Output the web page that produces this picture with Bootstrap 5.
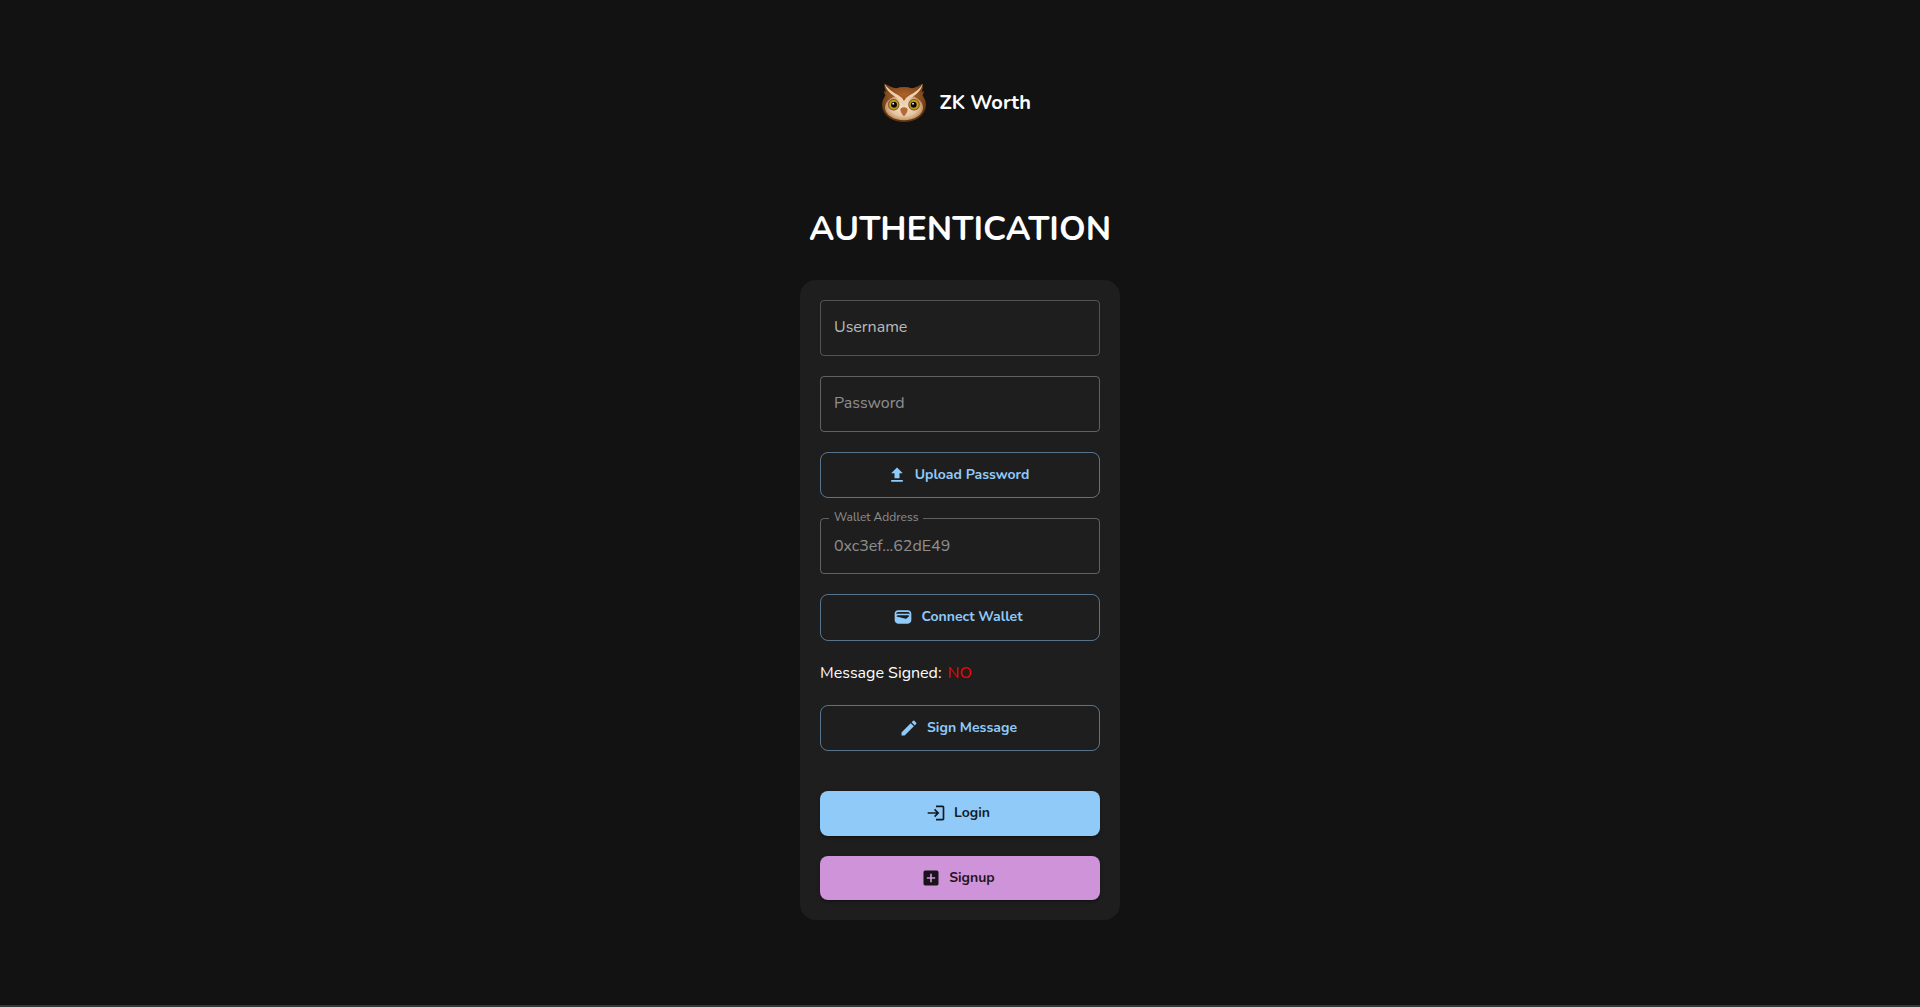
<!DOCTYPE html>
<html lang="en">
<head>
<meta charset="utf-8">
<meta name="viewport" content="width=device-width, initial-scale=1">
<title>ZK Worth</title>
<link rel="stylesheet" href="https://cdn.jsdelivr.net/npm/bootstrap@5.3.0/dist/css/bootstrap.min.css">
<style>
  body { background: #121212; color: #fff; font-family: Nunito, "Nunito Sans", Lato, sans-serif; font-size: 16px; line-height: 24px; overflow: hidden; }
  .page { height: 100vh; border-bottom: 2px solid #393637; padding-top: 78px; }
  .brand { height: 48px; font-size: 20px; font-weight: 700; gap: 11.5px; padding-right: 9px; }
  .brand span { padding-top: 2px; }
  .page-title { font-size: 34px; font-weight: 700; line-height: 42px; margin: 82px 0 29.6px; }
  .auth-card { width: 320px; background: #1e1e1e; border-radius: 16px; padding: 20px; }
  .field { height: 56px; margin-bottom: 20px; padding: 15.2px 13px; line-height: 23px; border: 1px solid rgba(255,255,255,.23); border-radius: 4px; color: rgba(255,255,255,.7); }
  .field-disabled { border-color: rgba(255,255,255,.3); color: rgba(255,255,255,.5); }
  .field-filled { margin-top: 20px; padding-top: 15.5px; }
  .field-label { top: -13.2px; left: 8px; padding: 0 5px; font-size: 12px; background: #1e1e1e; }
  .field-label, .field-value { white-space: nowrap; }
  .action { --bs-btn-font-size: 14px; --bs-btn-font-weight: 700; --bs-btn-line-height: 24.5px; --bs-btn-padding-y: 10px; --bs-btn-border-radius: 8px; gap: 8px; padding-right: 16px; }
  .action svg { width: 20px; height: 20px; fill: currentColor; }
  .action-outline { --bs-btn-color: #90caf9; --bs-btn-border-color: rgba(144,202,249,.5); }
  .action-solid { --bs-btn-border-width: 0; color: rgba(0,0,0,.87); box-shadow: 0 3px 1px -2px rgba(0,0,0,.2), 0 2px 2px rgba(0,0,0,.14), 0 1px 5px rgba(0,0,0,.12); }
  .login { --bs-btn-bg: #90caf9; margin: 40px 0 20px; }
  .signup { --bs-btn-bg: #ce93d8; }
  .signed-row { margin: 20px 0; gap: 6px; }
  .signed-no { color: #f00; }
</style>
</head>
<body>
<main class="page d-flex flex-column align-items-center">
  <div class="brand d-flex align-items-center">
    <svg width="48" height="48" viewBox="0 0 48 48">
      <defs>
        <radialGradient id="head" cx=".5" cy=".35" r=".6"><stop offset="0" stop-color="#b06a30"/><stop offset=".6" stop-color="#8c501f"/><stop offset="1" stop-color="#623610"/></radialGradient>
        <radialGradient id="brow" cx=".5" cy=".6" r=".6"><stop offset="0" stop-color="#b0622a"/><stop offset="1" stop-color="#7c4519"/></radialGradient>
        <radialGradient id="face" cx=".5" cy=".5" r=".52"><stop offset="0" stop-color="#f6e2ca"/><stop offset=".65" stop-color="#e6c6a3"/><stop offset="1" stop-color="#bd8a5a"/></radialGradient>
        <radialGradient id="eye"><stop offset=".45" stop-color="#e9b91f"/><stop offset=".78" stop-color="#b88c1c"/><stop offset="1" stop-color="#5a3f1a"/></radialGradient>
      </defs>
      <path fill="url(#head)" d="M4.4 5.8C9 8 12.5 9.8 16 10.5Q24 8 32 10.5C35 9.8 39 8 42.8 5.8C43.3 9 42.5 11.5 41.6 14L44.2 13L42.6 17.5C45.2 21 46.1 24.5 45.9 28C45 38.5 34.5 44 24 44S3 38.5 2.1 28C1.9 24.5 2.8 21 5.4 17.5L3.6 13L6.2 14C5 11.5 4 9 4.4 5.8Z"/>
      <ellipse cx="24" cy="29.5" rx="19" ry="12.8" fill="url(#face)"/>
      <path fill="url(#brow)" d="M4.4 5.8C9 8.5 12.5 10 16 10.5Q24 8 32 10.5C35 10 39 8.5 42.8 5.8Q40 13 30 17.5Q26 20 24 24Q22 20 18 17.5Q8 13 4.4 5.8Z"/>
      <path fill="#edd0af" d="M4.6 6Q9 12.5 18 17Q22.5 19.5 24 23Q25.5 19.5 30 17Q39 12.5 42.6 6Q41 13.5 32.5 19Q27 22 24.8 29H23.2Q21 22 15.5 19Q6.5 13.5 4.6 6Z"/>
      <g fill="url(#eye)"><circle cx="13.7" cy="26.7" r="5.7"/><circle cx="34" cy="26.7" r="5.7"/></g>
      <g fill="#090909"><circle cx="14" cy="26.7" r="3"/><circle cx="33.7" cy="26.7" r="3"/></g>
      <g fill="#fff"><circle cx="13.2" cy="25.7" r=".9"/><circle cx="33" cy="25.7" r=".9"/></g>
      <path fill="#b5693a" d="M24 29.2C26.4 29.2 27.9 30.4 27.7 32C27.2 34.8 25.2 37 24 38.5C22.8 37 20.8 34.8 20.3 32C20.1 30.4 21.6 29.2 24 29.2Z"/>
    </svg>
    <span>ZK Worth</span>
  </div>
  <h1 class="page-title">AUTHENTICATION</h1>
  <section class="auth-card d-flex flex-column">
    <div class="field">Username</div>
    <div class="field field-disabled">Password</div>
    <button type="button" class="btn action action-outline d-flex justify-content-center align-items-center">
      <svg viewBox="0 0 24 24"><path d="M5 20h14v-2H5v2zm0-10h4v6h6v-6h4l-7-7-7 7z"/></svg>
      <span>Upload Password</span>
    </button>
    <div class="field field-disabled field-filled position-relative">
      <span class="field-label position-absolute">Wallet Address</span>
      <span class="field-value">0xc3ef...62dE49</span>
    </div>
    <button type="button" class="btn action action-outline d-flex justify-content-center align-items-center">
      <svg viewBox="0 0 24 24"><path d="M18 4H6C3.79 4 2 5.79 2 8v8c0 2.21 1.79 4 4 4h12c2.21 0 4-1.79 4-4V8c0-2.21-1.79-4-4-4zm-1.86 9.77c-.24.2-.57.28-.88.2L4.15 11.25C4.45 10.52 5.16 10 6 10h12c.67 0 1.26.34 1.63.84l-3.49 2.93zM6 6h12c1.1 0 2 .9 2 2v.55c-.59-.34-1.27-.55-2-.55H6c-.73 0-1.41.21-2 .55V8c0-1.1.9-2 2-2z"/></svg>
      <span>Connect Wallet</span>
    </button>
    <div class="signed-row d-flex"><span>Message Signed:</span><span class="signed-no">NO</span></div>
    <button type="button" class="btn action action-outline d-flex justify-content-center align-items-center">
      <svg viewBox="0 0 24 24"><path d="M3 17.25V21h3.75L17.81 9.94l-3.75-3.75L3 17.25zM20.71 7.04c.39-.39.39-1.02 0-1.41l-2.34-2.34a.9959.9959 0 0 0-1.41 0l-1.83 1.83 3.75 3.75 1.83-1.83z"/></svg>
      <span>Sign Message</span>
    </button>
    <button type="button" class="btn action action-solid login d-flex justify-content-center align-items-center">
      <svg viewBox="0 0 24 24"><path d="M11 7 9.6 8.4l2.6 2.6H2v2h10.2l-2.6 2.6L11 17l5-5-5-5zm9 12h-8v2h8c1.1 0 2-.9 2-2V5c0-1.1-.9-2-2-2h-8v2h8v14z"/></svg>
      <span>Login</span>
    </button>
    <button type="button" class="btn action action-solid signup d-flex justify-content-center align-items-center">
      <svg viewBox="0 0 24 24"><path d="M19 3H5c-1.11 0-2 .9-2 2v14c0 1.1.89 2 2 2h14c1.1 0 2-.9 2-2V5c0-1.1-.9-2-2-2zm-2 10h-4v4h-2v-4H7v-2h4V7h2v4h4v2z"/></svg>
      <span>Signup</span>
    </button>
  </section>
</main>
<script src="https://cdn.jsdelivr.net/npm/bootstrap@5.3.0/dist/js/bootstrap.bundle.min.js"></script>
</body>
</html>
